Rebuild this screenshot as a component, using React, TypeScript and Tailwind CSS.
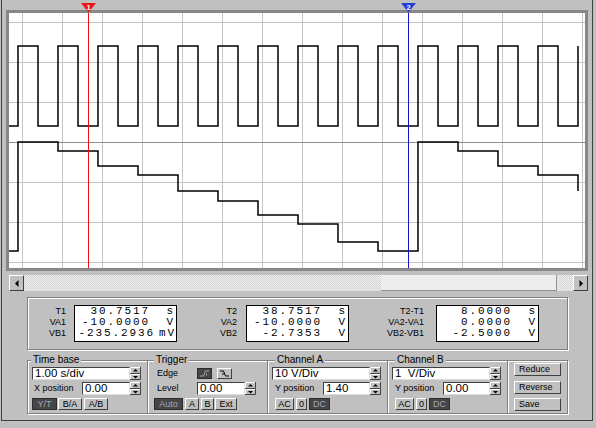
import React from 'react';

// win-style bevels
const raised =
  'border border-t-white border-l-white border-r-[#404040] border-b-[#404040] bg-[#c0c0c0] text-black';
const pressed = 'border border-[#2c2c2c] bg-[#464646] text-[#a4a4b2]';
const sunken =
  'border border-t-[#404040] border-l-[#404040] border-r-[#dcdcdc] border-b-[#dcdcdc] bg-white';
const etched = 'border-[#808080] shadow-[inset_1px_1px_0_#fff,1px_1px_0_#fff]';

const levels = [129, 138, 153, 162, 178, 188, 202, 211, 229, 238];

function squarePath() {
  let d = 'M0 113 H9 V33';
  for (let k = 0; k < 14; k++) {
    const x = 9 + 40 * k;
    d += ` H${x + 20} V113 H${x + 40} V33`;
  }
  return d;
}

function stairPath() {
  let d = 'M0 238 H9';
  for (let i = 0; i < 15; i++) {
    const x = 9 + 40 * i;
    d += ` V${levels[i % 10]}`;
    if (i < 14) d += ` H${x + 40}`;
  }
  return d;
}

function CursorFlag({ color, n, className }: { color: string; n: string; className: string }) {
  return (
    <svg width="15" height="10" viewBox="0 0 15 10" className={className}>
      <path d="M0 0 H15 L7.5 9.5 Z" fill={color} />
      <text
        x="7.5"
        y="6.5"
        textAnchor="middle"
        fontSize="7.5"
        fontWeight="bold"
        fill="#fff"
        fontFamily="Liberation Sans, Arial, sans-serif"
      >
        {n}
      </text>
    </svg>
  );
}

function Screen() {
  const vx = Array.from({ length: 15 }, (_, i) => 13.5 + 40 * i);
  const hy = Array.from({ length: 7 }, (_, i) => 9.5 + 40 * i);
  return (
    <div className="relative ml-[4px] mt-[10px] h-[261px] w-[582px] shrink-0 border-[3px] border-[#878787] bg-white">
      <svg width="576" height="255" className="block">
        {vx.map(x => (
          <line key={x} x1={x} y1={0} x2={x} y2={255} stroke="#c4c4c4" strokeWidth="1" />
        ))}
        {hy.map(y => (
          <line key={y} x1={0} y1={y} x2={576} y2={y} stroke={y === 129.5 ? '#8c8c8c' : '#c4c4c4'} strokeWidth="1" />
        ))}
        <path d={squarePath()} stroke="#000" strokeWidth="1.5" fill="none" />
        <path d={stairPath()} stroke="#000" strokeWidth="1.5" fill="none" />
        <line x1={79.5} y1={0} x2={79.5} y2={255} stroke="#f01010" strokeWidth="1" />
        <line x1={399.5} y1={0} x2={399.5} y2={255} stroke="#1414c4" strokeWidth="1" />
      </svg>
      <CursorFlag className="absolute left-[72px] top-[-10px]" color="#f01414" n="1" />
      <CursorFlag className="absolute left-[392px] top-[-10px]" color="#2040d8" n="2" />
    </div>
  );
}

function ScrollBar() {
  return (
    <div className="ml-[7px] mt-[4px] flex h-[16px] w-[579px] shrink-0">
      <div className={`${raised} flex w-[15px] items-center justify-center`}>
        <svg width="4" height="7" viewBox="0 0 4 7">
          <path d="M3.5 0 V7 L0 3.5 Z" fill="#000" />
        </svg>
      </div>
      <div className="flex flex-1 bg-[#e4e4e4] bg-[image:repeating-conic-gradient(#d2d2d2_0_25%,#f2f2f2_0_50%)] bg-[length:2px_2px]">
        <div className="w-[357px]" />
        <div className="w-[176px] border-b border-r border-[#909090] bg-[#ededed]" />
      </div>
      <div className={`${raised} flex w-[15px] items-center justify-center`}>
        <svg width="4" height="7" viewBox="0 0 4 7">
          <path d="M0.5 0 V7 L4 3.5 Z" fill="#000" />
        </svg>
      </div>
    </div>
  );
}

type Row = { n: string; u: string; nw?: string; uw?: string };

const readouts: { labels: string[]; rows: Row[]; lw: string; gap: string }[] = [
  {
    labels: ['T1', 'VA1', 'VB1'],
    rows: [
      { n: '30.7517', u: 's' },
      { n: '-10.0000', u: 'V' },
      { n: '-235.2936', u: 'mV', nw: 'w-[80px]', uw: 'w-[21px]' },
    ],
    lw: 'w-[38px]',
    gap: 'ml-[8px]',
  },
  {
    labels: ['T2', 'VA2', 'VB2'],
    rows: [
      { n: '38.7517', u: 's' },
      { n: '-10.0000', u: 'V' },
      { n: '-2.7353', u: 'V' },
    ],
    lw: 'w-[60px]',
    gap: 'ml-[9px]',
  },
  {
    labels: ['T2-T1', 'VA2-VA1', 'VB2-VB1'],
    rows: [
      { n: '8.0000', u: 's' },
      { n: '0.0000', u: 'V' },
      { n: '-2.5000', u: 'V' },
    ],
    lw: 'w-[75px]',
    gap: 'ml-[12px]',
  },
];

function Readout() {
  return (
    <div className={`${etched} ml-[25px] mt-[6px] flex h-[53px] w-[541px] shrink-0 items-center border`}>
      {readouts.map(r => (
        <React.Fragment key={r.labels[0]}>
          <div className={`${r.lw} flex h-[37px] flex-col pt-px text-right text-[9px]`}>
            {r.labels.map(l => (
              <div key={l} className="h-[11px] leading-[11px]">{l}</div>
            ))}
          </div>
          <div className={`${r.gap} h-[37px] w-[103px] border border-black bg-white font-['Liberation_Mono',monospace] text-[11px]`}>
            {r.rows.map(row => (
              <div key={row.n + row.u} className="flex h-[11px] whitespace-pre leading-[11px] tracking-[1.9px]">
                <span className={`${row.nw ?? 'w-[75px]'} text-right`}>{row.n}</span>
                <span className={`${row.uw ?? 'w-[25px]'} text-right`}>{row.u}</span>
              </div>
            ))}
          </div>
        </React.Fragment>
      ))}
    </div>
  );
}

function Spin() {
  return (
    <svg width="11" height="13" viewBox="0 0 11 13" className="block shrink-0">
      <rect x="0" y="0" width="11" height="13" fill="#c0c0c0" />
      <path d="M0.5 6 V0.5 H10" stroke="#fff" fill="none" />
      <path d="M10.5 0 V6.5 H0" stroke="#404040" fill="none" />
      <path d="M3 4.5 H8 L5.5 2 Z" fill="#000" />
      <path d="M0.5 12 V7.5 H10" stroke="#fff" fill="none" />
      <path d="M10.5 7 V12.5 H0" stroke="#404040" fill="none" />
      <path d="M3 9 H8 L5.5 11.5 Z" fill="#000" />
    </svg>
  );
}

function SpinField({ value, w }: { value: string; w: string }) {
  return (
    <div className="flex h-[13px]">
      <div className={`${sunken} ${w} h-[13px] whitespace-pre pl-[2px] text-[11.5px] leading-[11px]`}>{value}</div>
      <Spin />
    </div>
  );
}

function Btn({ label, on, left, className = '' }: { label: string; on?: boolean; left?: boolean; className?: string }) {
  return (
    <div
      className={`${on ? pressed : raised} flex items-center ${left ? 'justify-start pl-[4px]' : 'justify-center'} text-[9px] leading-none ${className}`}
    >
      {label}
    </div>
  );
}

function EdgeBtn({ rising, on, className = '' }: { rising?: boolean; on?: boolean; className?: string }) {
  return (
    <div className={`${on ? pressed : raised} flex h-[11px] w-[15px] items-center justify-center ${className}`}>
      <svg width="11" height="7" viewBox="0 0 11 7">
        <path
          d={rising ? 'M1 6 H4.5 L6.5 1 H10' : 'M1 1 H4.5 L6.5 6 H10'}
          stroke="currentColor"
          fill="none"
          strokeWidth="1"
        />
        <path d={rising ? 'M7.5 3.5 V5.5' : 'M4 3 V5'} stroke="currentColor" strokeWidth="1" />
      </svg>
    </div>
  );
}

function Legend({ text, className = '' }: { text: string; className?: string }) {
  return <legend className={`bg-[#c0c0c0] px-[2px] text-[10px] leading-[12px] ${className}`}>{text}</legend>;
}

function Channel({ name, scale, pos }: { name: string; scale: string; pos: string }) {
  return (
    <fieldset className={`${etched} h-[60px] w-[120px] border border-l-0 pl-[4px]`}>
      <Legend text={name} className="ml-[3px]" />
      <div className="mt-px flex">
        <SpinField value={scale} w="w-[98px]" />
      </div>
      <div className="mt-[2px] flex h-[13px] items-center">
        <span className="ml-[3px] w-[48px] text-[9px]">Y position</span>
        <SpinField value={pos} w="w-[47px]" />
      </div>
      <div className="mt-[3px] flex h-[12px]">
        <Btn label="AC" className="ml-[3px] w-[19px]" />
        <Btn label="0" className="ml-[2px] w-[11px]" />
        <Btn label="DC" on className="ml-[2px] w-[21px]" />
      </div>
    </fieldset>
  );
}

function Controls() {
  return (
    <div className="ml-[25px] mt-[4px] flex shrink-0 items-start">
      <fieldset className={`${etched} h-[60px] w-[121px] border pl-[4px]`}>
        <Legend text="Time base" className="-ml-px" />
        <div className="mt-px flex">
          <SpinField value="1.00 s/div" w="w-[98px]" />
        </div>
        <div className="mt-[2px] flex h-[13px] items-center">
          <span className="ml-[2px] w-[48px] text-[9px]">X position</span>
          <SpinField value="0.00" w="w-[48px]" />
        </div>
        <div className="mt-[3px] flex h-[12px]">
          <Btn label="Y/T" on className="w-[25px]" />
          <Btn label="B/A" className="ml-px w-[24px]" />
          <Btn label="A/B" className="ml-[2px] w-[24px]" />
        </div>
      </fieldset>

      <fieldset className={`${etched} h-[60px] w-[120px] border border-l-0 pl-[6px]`}>
        <Legend text="Trigger" />
        <div className="mt-px flex h-[13px] items-center">
          <span className="ml-[3px] w-[40px] text-[9px]">Edge</span>
          <EdgeBtn rising on />
          <EdgeBtn className="ml-[5px]" />
        </div>
        <div className="mt-[2px] flex h-[13px] items-center">
          <span className="ml-[3px] w-[40px] text-[9px]">Level</span>
          <SpinField value="0.00" w="w-[48px]" />
        </div>
        <div className="mt-[3px] flex h-[12px]">
          <Btn label="Auto" on className="w-[29px]" />
          <Btn label="A" className="ml-[2px] w-[14px]" />
          <Btn label="B" className="ml-[2px] w-[13px]" />
          <Btn label="Ext" className="ml-px w-[22px]" />
        </div>
      </fieldset>

      <Channel name="Channel A" scale="10 V/Div" pos="1.40" />
      <Channel name="Channel B" scale="1  V/Div" pos="0.00" />

      <div className={`${etched} mt-[6px] flex h-[54px] w-[60px] flex-col border border-l-0 pl-[6px]`}>
        <Btn label="Reduce" left className="mt-[2px] h-[13px] w-[47px]" />
        <Btn label="Reverse" left className="mt-[5px] h-[13px] w-[47px]" />
        <Btn label="Save" left className="mt-[4px] h-[13px] w-[47px]" />
      </div>
    </div>
  );
}

export default function App() {
  return (
    <div className="h-[428px] w-[596px] select-none overflow-hidden bg-[#c0c0c0] font-['Liberation_Sans',Arial,sans-serif] text-black">
      <div className="ml-px flex h-[421px] w-[592px] flex-col border-b border-l border-r border-[#404040]">
        <Screen />
        <ScrollBar />
        <Readout />
        <Controls />
      </div>
    </div>
  );
}
